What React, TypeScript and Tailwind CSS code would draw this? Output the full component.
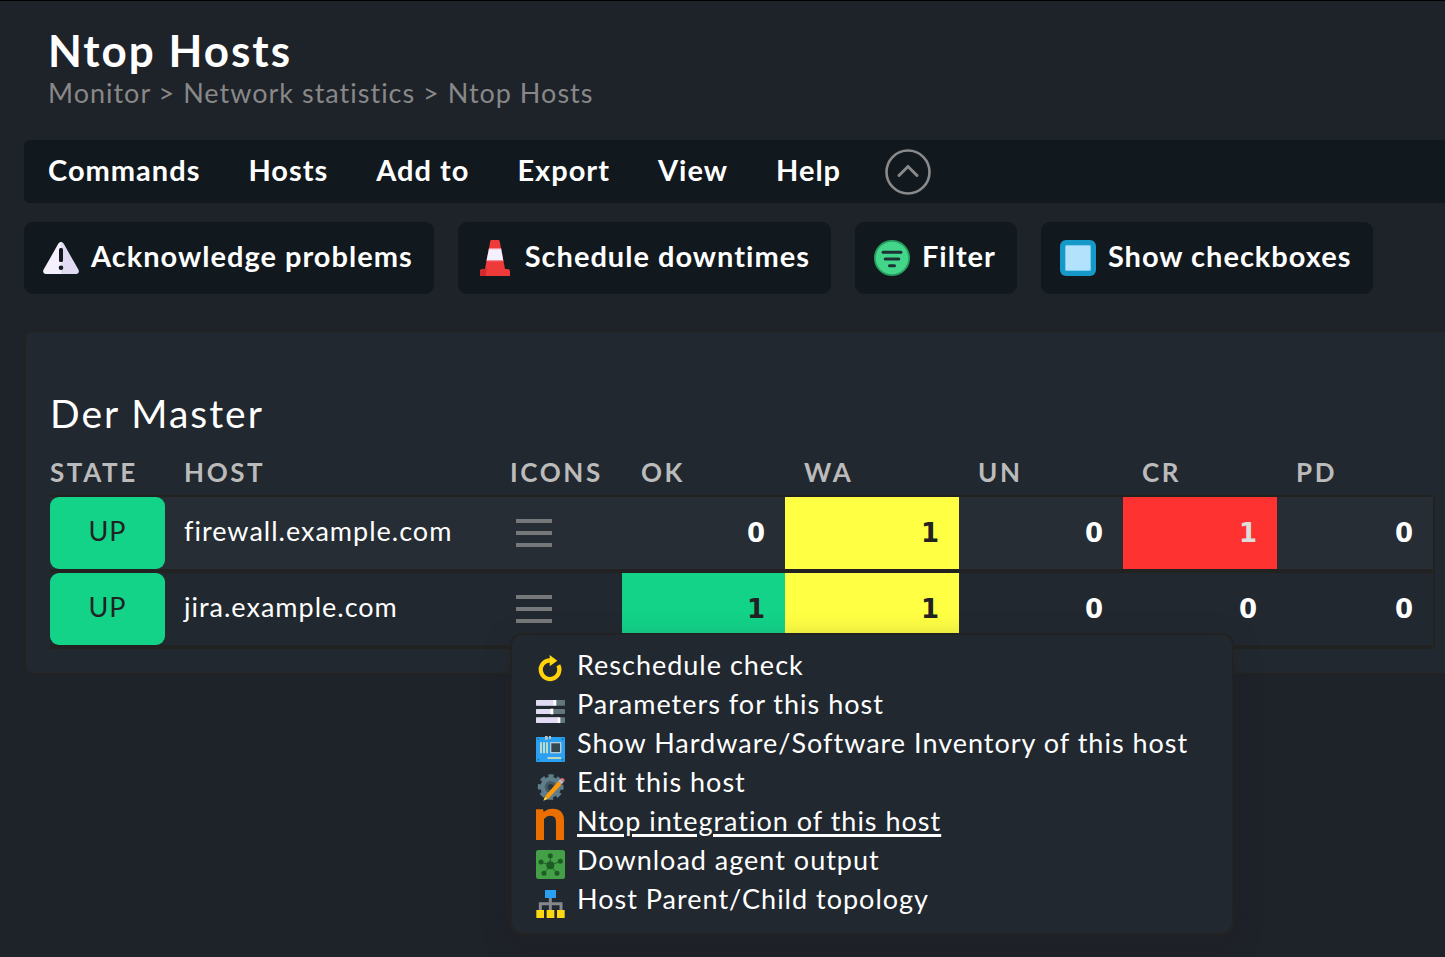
import type { ReactNode } from "react";

const WarningIcon = () => (
  <svg viewBox="0 0 36 36" className="size-9 shrink-0" aria-hidden="true">
    <path d="M18 2C16.9 2 16 2.5 15.4 3.6L.5 29.8C-.6 31.9.7 34 3 34H18Z" fill="#f4f0fe" />
    <path d="M18 2C19.1 2 20 2.5 20.6 3.6L35.5 29.8C36.6 31.9 35.3 34 33 34H18Z" fill="#e0daf2" />
    <rect x="16" y="8" width="4" height="14" rx="1.5" fill="#11181e" />
    <circle cx="18" cy="27.7" r="2.3" fill="#11181e" />
  </svg>
);

const ConeIcon = () => (
  <svg viewBox="0 0 36 36" className="size-9 shrink-0" aria-hidden="true">
    <path d="M14.5 0H21.3C22 0 22.4.4 22.6 1L28 29H8L13.3 1C13.5.4 13.9 0 14.5 0Z" fill="#ef3a3a" />
    <path d="M12 8.5H24.1L26.3 20.5H9.5Z" fill="#f4f0fe" />
    <path d="M12 8.2H24.1L24.3 9.3H11.7ZM9.7 20H26.2L26.4 21.2H9.5Z" fill="#f08c96" />
    <path d="M3 36V31.5Q3 29 5.5 29H30.5Q33 29 33 31.5V36Z" fill="#ef3a3a" />
    <path d="M3 36V31.5Q3 29 5.5 29H11Q9 30 9 32V36Z" fill="#d32a2e" />
  </svg>
);

const FilterIcon = () => (
  <svg viewBox="0 0 36 36" className="size-9 shrink-0" aria-hidden="true">
    <circle cx="18" cy="18" r="17.2" fill="#43d68a" stroke="#25995b" strokeWidth="1.7" />
    <path d="M9 12.3H27M11.2 19H24.8M15.5 25.8H20.5" stroke="#1f3036" strokeWidth="3" strokeLinecap="round" />
  </svg>
);

const CheckboxIcon = () => (
  <svg viewBox="0 0 36 36" className="size-9 shrink-0" aria-hidden="true">
    <rect width="36" height="36" rx="6" fill="#1698c9" />
    <rect x="5" y="5" width="26" height="26" rx="1.5" fill="#7ccbf0" />
    <rect x="6" y="6" width="24" height="24" rx="1" fill="#b3e3fc" />
  </svg>
);

const menuIcon = "mt-[10px] size-[29px] shrink-0 overflow-visible";

const RescheduleIcon = () => (
  <svg viewBox="0 0 87 87" className={menuIcon} aria-hidden="true">
    <path d="M42 16A28 28 0 1 0 67 31" fill="none" stroke="#ffd20a" strokeWidth="12.5" />
    <path d="M41 0L64 17L41 34Z" fill="#ffd90f" />
  </svg>
);

const ParametersIcon = () => (
  <svg viewBox="0 0 87 87" className={menuIcon} aria-hidden="true">
    <g fill="#64777f">
      <rect y="18" width="87" height="17" rx="2" />
      <rect y="45" width="87" height="15" rx="2" />
      <rect y="70" width="87" height="17" rx="2" />
    </g>
    <g fill="#e0daf2">
      <rect y="18" width="54" height="17" rx="2" />
      <rect y="45" width="45" height="15" rx="2" />
      <rect y="70" width="68" height="17" rx="2" />
    </g>
    <g fill="#ffffff">
      <rect x="52" y="18" width="9" height="17" />
      <rect x="43" y="44" width="9" height="17" />
      <rect x="65" y="70" width="8" height="17" />
    </g>
  </svg>
);

const InventoryIcon = () => (
  <svg viewBox="0 0 87 87" className={menuIcon} aria-hidden="true">
    <rect y="12" width="87" height="75" rx="3" fill="#29a0f2" />
    <path d="M27 9H35V20H27ZM39 9H45V18H39Z" fill="#b5c4cc" />
    <path d="M12 28H18V61H12ZM21 28H27V61H21ZM30 28H36V61H30Z" fill="#bcdcc8" />
    <rect x="44" y="29" width="30" height="30" fill="#33474f" stroke="#b5c9d3" strokeWidth="4" />
    <path d="M36 75H74" stroke="#f5e6a8" strokeWidth="4" strokeLinecap="round" />
    <g fill="#1578a8">
      <circle cx="7" cy="19" r="3" />
      <circle cx="80" cy="19" r="3" />
      <circle cx="7" cy="80" r="3" />
      <circle cx="80" cy="80" r="3" />
    </g>
  </svg>
);

const EditIcon = () => (
  <svg viewBox="0 0 87 87" className={menuIcon} aria-hidden="true">
    <circle cx="44" cy="45" r="32" fill="none" stroke="#607d8b" strokeWidth="13" strokeDasharray="15 10.13" strokeDashoffset="7.5" />
    <circle cx="44" cy="45" r="31" fill="#607d8b" />
    <circle cx="44" cy="45" r="18" fill="#455a64" />
    <circle cx="44" cy="45" r="9" fill="#2a3940" />
    <path d="M27 73L67 28L77 37L36 81Z" fill="#ff9b0a" />
    <path d="M27 73L36 81L22 86Z" fill="#ffd54f" />
    <path d="M67 28L73 21L83 30L77 37Z" fill="#b5c0c6" />
    <path d="M73 21Q77 15 83 20Q89 25 83 30Z" fill="#e57373" />
  </svg>
);

const NtopIcon = () => (
  <svg viewBox="0 0 87 87" className={menuIcon} aria-hidden="true">
    <path
      d="M0 -5H21L23 3Q34 -7 50 -7Q84 -7 84 29V87H60V33Q60 14 44 14Q32 14 24 24V87H0Z"
      fill="#ea6f00"
    />
  </svg>
);

const AgentIcon = () => (
  <svg viewBox="0 0 87 87" className={menuIcon} aria-hidden="true">
    <rect width="87" height="87" rx="7" fill="#43a047" />
    <path d="M43 46V17M43 46L15 36M43 46L73 34M43 46L24 70M43 46L63 70" stroke="#1f6427" strokeWidth="3" />
    <g fill="#1d5c25">
      <circle cx="43" cy="46" r="12" />
      <circle cx="43" cy="17" r="7.5" />
      <circle cx="15" cy="36" r="7.5" />
      <circle cx="73" cy="34" r="7.5" />
      <circle cx="24" cy="70" r="7.5" />
      <circle cx="63" cy="70" r="7.5" />
    </g>
  </svg>
);

const TopologyIcon = () => (
  <svg viewBox="0 0 87 87" className={menuIcon} aria-hidden="true">
    <path d="M43 26V64M13 64V44H75V64" fill="none" stroke="#85898d" strokeWidth="9" />
    <rect x="27" y="3" width="33" height="24" fill="#29a0f2" />
    <path d="M1 63H24V87H1ZM32 63H55V87H32ZM63 63H86V87H63Z" fill="#ffd90f" />
  </svg>
);

const menus = ["Commands", "Hosts", "Add to", "Export", "View", "Help"];

const actions: { label: string; icon: ReactNode }[] = [
  { label: "Acknowledge problems", icon: <WarningIcon /> },
  { label: "Schedule downtimes", icon: <ConeIcon /> },
  { label: "Filter", icon: <FilterIcon /> },
  { label: "Show checkboxes", icon: <CheckboxIcon /> },
];

const hostMenu: { label: string; icon: ReactNode; active?: boolean }[] = [
  { label: "Reschedule check", icon: <RescheduleIcon /> },
  { label: "Parameters for this host", icon: <ParametersIcon /> },
  { label: "Show Hardware/Software Inventory of this host", icon: <InventoryIcon /> },
  { label: "Edit this host", icon: <EditIcon /> },
  { label: "Ntop integration of this host", icon: <NtopIcon />, active: true },
  { label: "Download agent output", icon: <AgentIcon /> },
  { label: "Host Parent/Child topology", icon: <TopologyIcon /> },
];

const countKeys = ["OK", "WA", "UN", "CR", "PD"] as const;

const hitColors = {
  OK: "bg-[#13d389] text-[#222222]",
  WA: "bg-[#ffff44] text-[#222222]",
  UN: "bg-[#ff9664] text-[#222222]",
  CR: "bg-[#ff3232] text-[#dddddd]",
  PD: "text-white",
};

const hosts = [
  { name: "firewall.example.com", counts: [0, 1, 0, 1, 0], open: false },
  { name: "jira.example.com", counts: [1, 1, 0, 0, 0], open: true },
];

function HostMenu() {
  return (
    <ul className="absolute top-[60px] left-[19px] z-10 rounded-xl border-2 border-[#222222] bg-[#21282f] pt-[10px] pr-11 pb-[15px] pl-6 shadow-[0_8px_28px_rgba(34,34,34,0.3)]">
      {hostMenu.map((item) => (
        <li key={item.label}>
          <a
            href="#"
            className="flex h-[39px] items-start gap-3 text-[27px] leading-[39px] whitespace-nowrap text-white"
          >
            {item.icon}
            <span
              className={
                item.active ? "underline decoration-[3px] underline-offset-[3px]" : ""
              }
            >
              {item.label}
            </span>
          </a>
        </li>
      ))}
    </ul>
  );
}

export default function App() {
  return (
    <div className="min-h-screen overflow-x-hidden border-t border-black bg-[#1e2229] pb-6 pl-6 font-['Lato',sans-serif] tracking-[1px] text-white">
      <header className="pt-[23px] pb-[31px] pl-6">
        <h1 className="pb-px text-[44px] leading-[52px] font-bold tracking-[2px]">Ntop Hosts</h1>
        <p className="text-[27px] leading-8 text-[#888888]">
          Monitor &gt; Network statistics &gt; Ntop Hosts
        </p>
      </header>

      <nav className="flex h-[63px] items-center rounded-l-md bg-[#11181e] pl-6">
        <div className="flex gap-12 pb-1 text-[29px] leading-9 font-bold">
          {menus.map((label) => (
            <button key={label} type="button">
              {label}
            </button>
          ))}
        </div>
        <button type="button" aria-label="Collapse" className="ml-11">
          <svg viewBox="0 0 46 46" className="size-[46px]" fill="none" stroke="#8a8a8a" aria-hidden="true">
            <circle cx="23" cy="23" r="21.5" strokeWidth="2.6" />
            <path d="M14 26.5L23 17.5L32 26.5" strokeWidth="3" strokeLinecap="round" />
          </svg>
        </button>
      </nav>

      <div className="mt-[19px] flex gap-6">
        {actions.map((action) => (
          <button
            key={action.label}
            type="button"
            className="flex h-[72px] items-center gap-3 rounded-[9px] bg-[#11181e] pr-[21px] pl-[19px] text-[29px] leading-9 font-bold whitespace-nowrap"
          >
            {action.icon}
            <span className="pb-1">{action.label}</span>
          </button>
        ))}
      </div>

      <main className="mt-9 rounded-l-lg border-2 border-r-0 border-[#222222] bg-[#21282f] pt-[55px] pr-[10px] pb-6 pl-6">
        <h2 className="text-[39px] leading-[52px] tracking-[2px]">Der Master</h2>
        <table className="mt-3 w-full table-fixed border-separate border-spacing-0 border-b-2 border-[#222222] text-[27px]">
          <colgroup>
            <col className="w-[115px]" />
            <col className="w-[326px]" />
            <col className="w-[131px]" />
            <col className="w-[163px]" />
            <col className="w-[174px]" />
            <col className="w-[164px]" />
            <col className="w-[154px]" />
            <col />
          </colgroup>
          <thead>
            <tr className="text-left text-[26px] leading-[43px] tracking-widest text-[#bbbbbb]">
              <th className="pb-px font-bold">STATE</th>
              <th className="pb-px pl-[19px] font-bold">HOST</th>
              <th className="pb-px pl-[19px] font-bold">ICONS</th>
              {countKeys.map((key) => (
                <th key={key} className="pb-px pl-[19px] font-bold">
                  {key}
                </th>
              ))}
            </tr>
          </thead>
          <tbody>
            {hosts.map((host) => (
              <tr key={host.name} className="h-[76px] odd:bg-[#262d34]">
                <td className="border-y-2 border-[#222222] p-0">
                  <div className="flex h-[72px] items-center justify-center rounded-[9px] bg-[#13d389] pb-1 text-[#222222]">
                    UP
                  </div>
                </td>
                <td className="border-y-2 border-[#222222] pt-0 pb-1 pl-[19px]">
                  <a href="#">{host.name}</a>
                </td>
                <td className="relative border-y-2 border-[#222222] py-0 pl-[25px]">
                  <button type="button" aria-label="Open host menu" className="block">
                    <svg viewBox="0 0 36 28" className="h-7 w-9" fill="#77787a" aria-hidden="true">
                      <path d="M0 0H36V4H0ZM0 12H36V16H0ZM0 24H36V28H0Z" />
                    </svg>
                  </button>
                  {host.open && <HostMenu />}
                </td>
                {host.counts.map((count, i) => (
                  <td
                    key={countKeys[i]}
                    className={`border-y-2 border-[#222222] py-0 pr-[19px] text-right font-['DejaVu_Sans',sans-serif] text-[26px] font-bold last:border-r-2 ${
                      count > 0 ? hitColors[countKeys[i]] : "text-white"
                    }`}
                  >
                    {count}
                  </td>
                ))}
              </tr>
            ))}
          </tbody>
        </table>
      </main>
    </div>
  );
}
